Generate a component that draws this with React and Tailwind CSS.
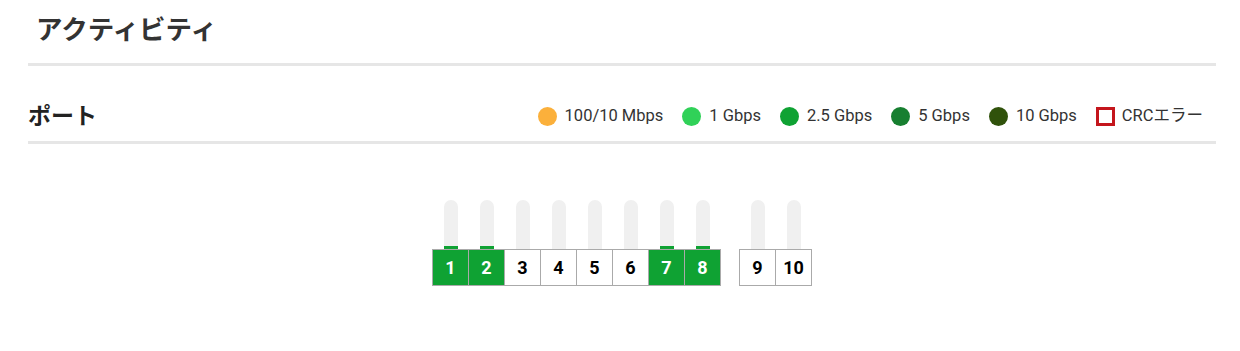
import React from "react";

const legend = [
  { label: "100/10 Mbps", color: "bg-[#fbb03b]" },
  { label: "1 Gbps", color: "bg-[#30d158]" },
  { label: "2.5 Gbps", color: "bg-[#0fa233]" },
  { label: "5 Gbps", color: "bg-[#177f30]" },
  { label: "10 Gbps", color: "bg-[#30520b]" },
];

const group1 = [
  { n: 1, on: true },
  { n: 2, on: true },
  { n: 3, on: false },
  { n: 4, on: false },
  { n: 5, on: false },
  { n: 6, on: false },
  { n: 7, on: true },
  { n: 8, on: true },
];
const group2 = [
  { n: 9, on: false },
  { n: 10, on: false },
];

function Port({ n, on, first }) {
  return (
    <div className={`flex w-[37px] flex-col items-center ${first ? "" : "-ml-px"}`}>
      <div className="flex h-[49px] w-[14px] flex-col justify-end overflow-hidden rounded-t-full bg-[#f0f0f0]">
        {on && <div className="h-[3px] w-full bg-[#0fa233]" />}
      </div>
      <div
        className={`flex h-[37px] w-[37px] items-center justify-center border border-[#aaaaaa] text-[18px] font-bold ${
          on ? "bg-[#0fa233] text-white" : "bg-white text-black"
        }`}
      >
        {n}
      </div>
    </div>
  );
}

function Group({ ports }) {
  return (
    <div className="flex">
      {ports.map((p, i) => (
        <Port key={p.n} n={p.n} on={p.on} first={i === 0} />
      ))}
    </div>
  );
}

export default function App() {
  return (
    <div className="h-[351px] w-[1240px] bg-white font-['Roboto','Noto_Sans_CJK_JP',sans-serif]">
      <div className="ml-[28px] w-[1188px]">
        <div className="flex h-[63px] items-center pb-[3px] pl-[8px]">
          <h1 className="text-[26.5px] font-bold leading-none text-[#333333]">アクティビティ</h1>
        </div>
        <div className="h-[3px] bg-[#e6e6e6]" />
        <div className="flex h-[75px] items-center justify-between pr-[13px] pt-[25px]">
          <h2 className="text-[23px] font-bold leading-none text-[#222222]">ポート</h2>
          <div className="flex items-center text-[16.5px] text-[#333333]">
            {legend.map((l) => (
              <div key={l.label} className="mr-[19px] flex items-center">
                <span className={`mr-[8px] block h-[19px] w-[19px] rounded-full ${l.color}`} />
                <span>{l.label}</span>
              </div>
            ))}
            <div className="flex items-center">
              <span className="mr-[7px] block h-[19px] w-[19px] border-[3px] border-[#c4161c]" />
              <span>CRCエラー</span>
            </div>
          </div>
        </div>
        <div className="h-[3px] bg-[#e6e6e6]" />
        <div className="flex justify-center gap-[18px] pt-[56px]">
          <Group ports={group1} />
          <Group ports={group2} />
        </div>
      </div>
    </div>
  );
}
